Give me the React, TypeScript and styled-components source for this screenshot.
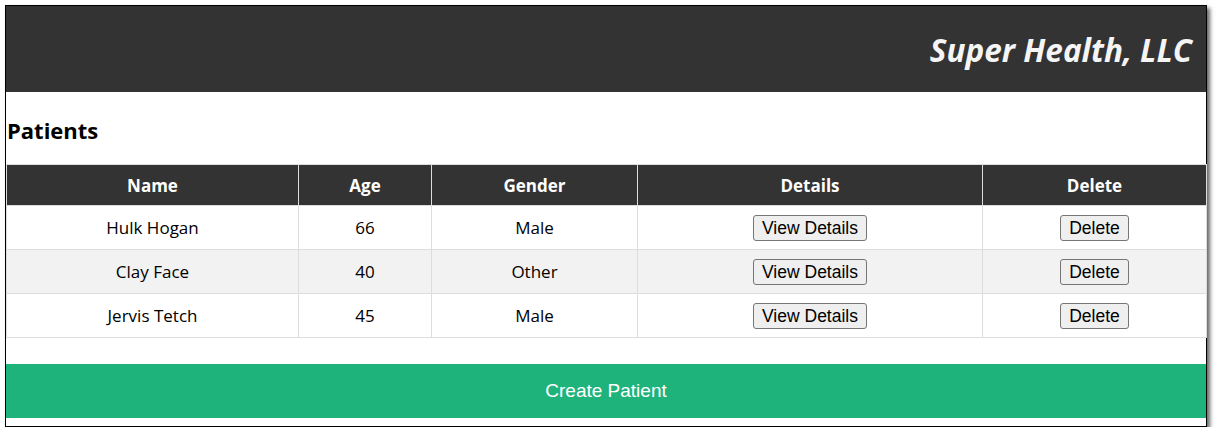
import React from "react";
import styled, { createGlobalStyle } from "styled-components";

const GlobalStyle = createGlobalStyle`
  html, body { margin: 0; padding: 0; background: #ffffff; }
  body { font-family: "Open Sans", "Noto Sans", sans-serif; color: #000; }
`;

const Page = styled.div`
  padding: 5px 0 0 5px;
`;

const Frame = styled.div`
  width: 1200px;
  border: 1px solid #000;
  box-shadow: 3px 3px 4px rgba(0, 0, 0, 0.6);
  background: #fff;
  padding-bottom: 8px;
`;

const Header = styled.header`
  height: 86px;
  background: #333333;
  display: flex;
  align-items: center;
  justify-content: flex-end;
  padding-right: 14px;
`;

const Title = styled.h1`
  margin: 0;
  font-family: "Open Sans", "Noto Sans", sans-serif;
  font-style: italic;
  font-weight: 700;
  font-size: 31.5px;
  letter-spacing: 0;
  color: #f5f5f5;
`;

const SectionTitle = styled.h2`
  margin: 0;
  padding: 23px 0 19px 1px;
  line-height: 30px;
  font-size: 22px;
  font-weight: 700;
`;

const Table = styled.table`
  width: 1200px;
  border-collapse: collapse;
  table-layout: fixed;
`;

const HeadCell = styled.th`
  height: 40px;
  padding: 0;
  background: #333333;
  color: #ffffff;
  font-size: 17px;
  font-weight: 700;
  border: 1px solid #dddddd;
  text-align: center;
`;

const Row = styled.tr<{ $alt: boolean }>`
  background: ${(p) => (p.$alt ? "#f2f2f2" : "#ffffff")};
`;

const Cell = styled.td`
  height: 43px;
  padding: 0;
  border: 1px solid #dddddd;
  text-align: center;
  font-size: 17px;
`;

const SmallButton = styled.button`
  font-family: "Liberation Sans", Arial, sans-serif;
  font-size: 17.5px;
  line-height: 20px;
  padding: 2px 8px 2px;
  background: #efefef;
  color: #000;
  border: 1px solid #767676;
  border-radius: 3px;
`;

const CreateButton = styled.button`
  display: block;
  width: 100%;
  height: 54px;
  margin-top: 26px;
  border: none;
  background: #1fb37c;
  color: #ffffff;
  font-family: "Liberation Sans", Arial, sans-serif;
  font-size: 19px;
`;

const patients = [
  { name: "Hulk Hogan", age: 66, gender: "Male" },
  { name: "Clay Face", age: 40, gender: "Other" },
  { name: "Jervis Tetch", age: 45, gender: "Male" },
];

const widths = [292, 133, 206, 345, 224];

export default function App() {
  return (
    <Page>
      <GlobalStyle />
      <Frame>
        <Header>
          <Title>Super Health, LLC</Title>
        </Header>
        <SectionTitle>Patients</SectionTitle>
        <Table>
          <colgroup>
            {widths.map((w, i) => (
              <col key={i} style={{ width: w }} />
            ))}
          </colgroup>
          <thead>
            <tr>
              <HeadCell>Name</HeadCell>
              <HeadCell>Age</HeadCell>
              <HeadCell>Gender</HeadCell>
              <HeadCell>Details</HeadCell>
              <HeadCell>Delete</HeadCell>
            </tr>
          </thead>
          <tbody>
            {patients.map((p, i) => (
              <Row key={p.name} $alt={i % 2 === 1}>
                <Cell>{p.name}</Cell>
                <Cell>{p.age}</Cell>
                <Cell>{p.gender}</Cell>
                <Cell>
                  <SmallButton>View Details</SmallButton>
                </Cell>
                <Cell>
                  <SmallButton>Delete</SmallButton>
                </Cell>
              </Row>
            ))}
          </tbody>
        </Table>
        <CreateButton>Create Patient</CreateButton>
      </Frame>
    </Page>
  );
}
